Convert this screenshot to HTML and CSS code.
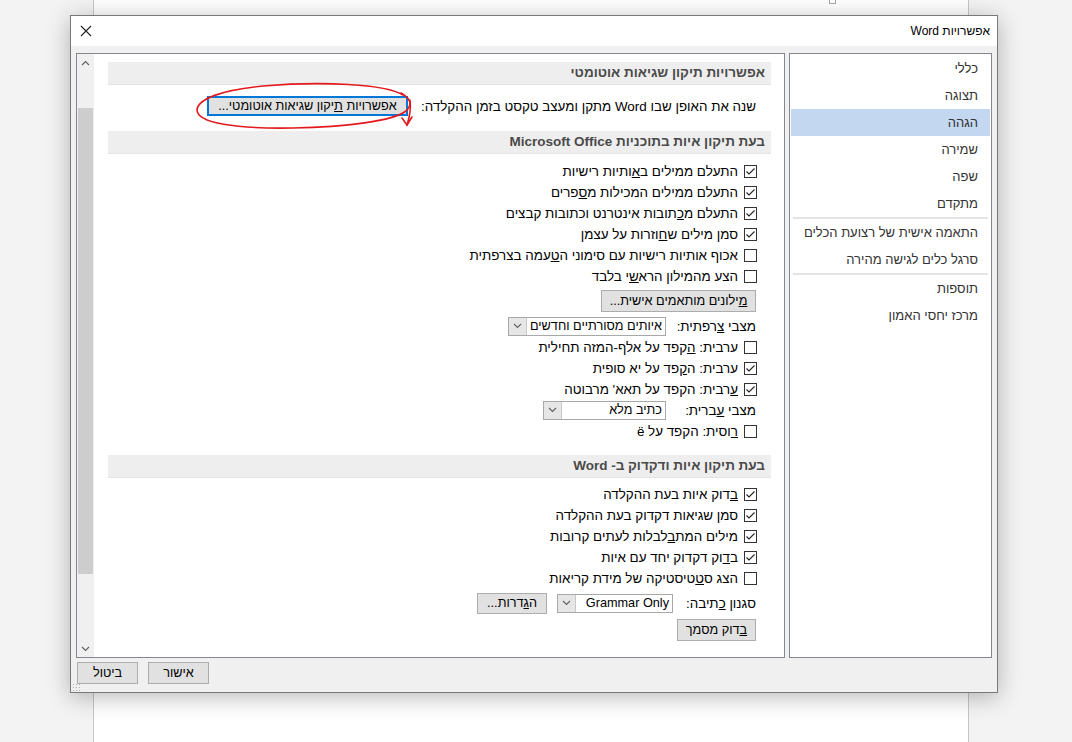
FILE: index.html
```html
<!DOCTYPE html>
<html lang="he">
<head>
<meta charset="utf-8">
<title>אפשרויות Word</title>
<link rel="stylesheet" href="styles.css">
</head>
<body>
<div class="desk">
  <div class="doc"></div>
  <div class="tick"></div>

  <div class="dialog" dir="rtl">
    <div class="titlebar">
      <span class="title">אפשרויות Word</span>
      <span class="close"><svg width="12" height="12" viewBox="0 0 12 12"><path d="M1 1 L11 11 M11 1 L1 11" stroke="#222" stroke-width="1.1" fill="none"/></svg></span>
    </div>

    <div class="body">
      <div class="panes">
        <nav class="nav">
          <div class="nav-item">כללי</div>
          <div class="nav-item">תצוגה</div>
          <div class="nav-item selected">הגהה</div>
          <div class="nav-item">שמירה</div>
          <div class="nav-item">שפה</div>
          <div class="nav-item">מתקדם</div>
          <div class="nav-sep"></div>
          <div class="nav-item">התאמה אישית של רצועת הכלים</div>
          <div class="nav-item">סרגל כלים לגישה מהירה</div>
          <div class="nav-sep"></div>
          <div class="nav-item">תוספות</div>
          <div class="nav-item">מרכז יחסי האמון</div>
        </nav>

        <div class="content">
          <div class="main">
            <div class="sec-head first">אפשרויות תיקון שגיאות אוטומטי</div>
            <div class="line ac-line">
              <span>שנה את האופן שבו Word מתקן ומעצב טקסט בזמן ההקלדה:</span>
              <span class="btn btn-ac"><span>אפשרויות <u>ת</u>יקון שגיאות אוטומטי...</span></span>
            </div>

            <div class="sec-head sec2">בעת תיקון איות בתוכניות Microsoft Office</div>
            <div class="cblist l1">
              <div class="cbrow"><span class="cb"><svg width="11" height="11" viewBox="0 0 11 11"><path d="M1.5 5.5 L4 8 L9.5 2.5" /></svg></span><span>התעלם ממילים ב<u>א</u>ותיות רישיות</span></div>
              <div class="cbrow"><span class="cb"><svg width="11" height="11" viewBox="0 0 11 11"><path d="M1.5 5.5 L4 8 L9.5 2.5" /></svg></span><span>התעלם ממילים המכילות מ<u>ס</u>פרים</span></div>
              <div class="cbrow"><span class="cb"><svg width="11" height="11" viewBox="0 0 11 11"><path d="M1.5 5.5 L4 8 L9.5 2.5" /></svg></span><span>התעלם מ<u>כ</u>תובות אינטרנט וכתובות קבצים</span></div>
              <div class="cbrow"><span class="cb"><svg width="11" height="11" viewBox="0 0 11 11"><path d="M1.5 5.5 L4 8 L9.5 2.5" /></svg></span><span>סמן מילים ש<u>ח</u>וזרות על עצמן</span></div>
              <div class="cbrow"><span class="cb"></span><span>אכוף אותיות רישיות עם סימוני ה<u>ט</u>עמה בצרפתית</span></div>
              <div class="cbrow"><span class="cb"></span><span>הצע מהמילון הרא<u>ש</u>י בלבד</span></div>
            </div>
            <div class="line dict-line"><span class="btn btn-dict"><span><u>מ</u>ילונים מותאמים אישית...</span></span></div>
            <div class="line sel-line fr-line">
              <span class="lbl">מצבי <u>צ</u>רפתית:</span>
              <span class="select sel-fr"><span class="sel-text">איותים מסורתיים וחדשים</span><span class="sel-arrow"><svg width="9" height="6" viewBox="0 0 9 6"><path d="M1 1 L4.5 4.5 L8 1"/></svg></span></span>
            </div>
            <div class="cblist l2">
              <div class="cbrow"><span class="cb"></span><span>ערבית: <u>ה</u>קפד על אלף-המזה תחילית</span></div>
              <div class="cbrow"><span class="cb"><svg width="11" height="11" viewBox="0 0 11 11"><path d="M1.5 5.5 L4 8 L9.5 2.5" /></svg></span><span>ערבית: ה<u>ק</u>פד על יא סופית</span></div>
              <div class="cbrow"><span class="cb"><svg width="11" height="11" viewBox="0 0 11 11"><path d="M1.5 5.5 L4 8 L9.5 2.5" /></svg></span><span><u>ע</u>רבית: הקפד על תאא' מרבוטה</span></div>
            </div>
            <div class="line sel-line he-line">
              <span class="lbl">מצבי <u>ע</u>ברית:</span>
              <span class="select sel-he"><span class="sel-text">כתיב מלא</span><span class="sel-arrow"><svg width="9" height="6" viewBox="0 0 9 6"><path d="M1 1 L4.5 4.5 L8 1"/></svg></span></span>
            </div>
            <div class="cblist l3">
              <div class="cbrow"><span class="cb"></span><span><u>ר</u>וסית: הקפד על ë</span></div>
            </div>

            <div class="sec-head sec3">בעת תיקון איות ודקדוק ב- Word</div>
            <div class="cblist l4">
              <div class="cbrow"><span class="cb"><svg width="11" height="11" viewBox="0 0 11 11"><path d="M1.5 5.5 L4 8 L9.5 2.5" /></svg></span><span><u>ב</u>דוק איות בעת ההקלדה</span></div>
              <div class="cbrow"><span class="cb"><svg width="11" height="11" viewBox="0 0 11 11"><path d="M1.5 5.5 L4 8 L9.5 2.5" /></svg></span><span>סמ<u>ן</u> שגיאות דקדוק בעת ההקלדה</span></div>
              <div class="cbrow"><span class="cb"><svg width="11" height="11" viewBox="0 0 11 11"><path d="M1.5 5.5 L4 8 L9.5 2.5" /></svg></span><span>מילים המת<u>ב</u>לבלות לעתים קרובות</span></div>
              <div class="cbrow"><span class="cb"><svg width="11" height="11" viewBox="0 0 11 11"><path d="M1.5 5.5 L4 8 L9.5 2.5" /></svg></span><span>ב<u>ד</u>וק דקדוק יחד עם איות</span></div>
              <div class="cbrow"><span class="cb"></span><span>הצג ס<u>ט</u>טיסטיקה של מידת קריאות</span></div>
            </div>
            <div class="line sel-line ws-line">
              <span class="lbl lbl-ws">סגנון <u>כ</u>תיבה:</span>
              <span class="select sel-ws"><span class="sel-text">Grammar Only</span><span class="sel-arrow"><svg width="9" height="6" viewBox="0 0 9 6"><path d="M1 1 L4.5 4.5 L8 1"/></svg></span></span>
              <span class="btn btn-set"><span>ה<u>ג</u>דרות...</span></span>
            </div>
            <div class="line chk-line"><span class="btn btn-chk"><span><u>ב</u>דוק מסמך</span></span></div>
          </div>

          <div class="scrollbar">
            <span class="sb-arrow"><svg width="9" height="6" viewBox="0 0 9 6"><path d="M1 5 L4.5 1.5 L8 5"/></svg></span>
            <div class="sb-track"><div class="sb-thumb"></div></div>
            <span class="sb-arrow"><svg width="9" height="6" viewBox="0 0 9 6"><path d="M1 1 L4.5 4.5 L8 1"/></svg></span>
          </div>
        </div>
      </div>

      <div class="footer">
        <span class="btn btn-foot">אישור</span>
        <span class="btn btn-foot">ביטול</span>
      </div>
      <div class="grip"></div>
    </div>

    <svg class="annot" width="240" height="50" viewBox="190 82 240 50">
      <path d="M402 94 C 385 83, 320 80, 262 85 C 220 89, 197 98, 196 109 C 196 122, 235 128, 292 127 C 345 126, 392 120, 405 110 C 412 103, 409 97, 400 92" />
      <path d="M409 99 C 410 107, 409 115, 406 124" />
      <path d="M401 117 L 406 124 L 411 116" />
    </svg>
  </div>
</div>
</body>
</html>
```

FILE: styles.css
```css
* { box-sizing: border-box; }
html, body { margin: 0; padding: 0; }
body {
  width: 1072px;
  height: 742px;
  overflow: hidden;
  background: #f3f3f3;
  font-family: "Liberation Sans", "DejaVu Sans", Arial, sans-serif;
}
.desk {
  position: relative;
  width: 1072px;
  height: 742px;
}
.doc {
  margin-left: 93px;
  width: 876px;
  height: 742px;
  background: #fff;
  border-left: 1px solid #c6c6c6;
  border-right: 1px solid #c6c6c6;
}
.tick {
  position: absolute;
  left: 829px;
  top: -2px;
  width: 7px;
  height: 6px;
  border: 1px solid #a8a8a8;
  background: #fff;
}
.dialog {
  position: absolute;
  left: 70px;
  top: 15px;
  width: 928px;
  height: 678px;
  border: 1px solid #787878;
  background: #f0f0f0;
  box-shadow: 0 4px 22px rgba(0,0,0,0.28);
  display: flex;
  flex-direction: column;
}
.titlebar {
  height: 30px;
  background: #fff;
  display: flex;
  align-items: center;
  justify-content: space-between;
  padding: 0 7px 0 9px;
  font-size: 12px;
  color: #000;
}
.close { display: flex; width: 12px; height: 12px; }
.body {
  position: relative;
  flex: 1;
  display: flex;
  flex-direction: column;
  padding: 7px 5px 0 5px;
}
.panes {
  display: flex;
  gap: 4px;
  height: 605px;
}
.nav {
  width: 203px;
  border: 1px solid #828790;
  background: #fff;
  padding-top: 1px;
  font-size: 13px;
  color: #333;
}
.nav-item {
  height: 27px;
  line-height: 27px;
  padding-right: 12px;
  margin: 0 1px;
  white-space: nowrap;
}
.nav-item.selected { background: #c4d7f1; }
.nav-sep {
  height: 2px;
  margin: 0 3px;
  background: #e4e4e4;
}
.content {
  width: 709px;
  border: 1px solid #828790;
  background: #fff;
  display: flex;
}
.main {
  flex: 1;
  padding: 8px 13px 0 14px;
  font-size: 13.4px;
  color: #000;
}
.sec-head {
  height: 23px;
  line-height: 22px;
  background: #eeeeee;
  border-bottom: 1px solid #e3e3e3;
  padding-right: 6px;
  font-weight: bold;
  font-size: 13.5px;
  color: #4a4a4a;
}
.sec2 { margin-top: 15px; }
.sec3 { margin-top: 13px; }
.line {
  display: flex;
  align-items: center;
  padding-right: 15px;
}
.ac-line { margin-top: 11px; height: 20px; gap: 13px; }
.btn {
  display: inline-flex;
  align-items: center;
  justify-content: center;
  background: #e1e1e1;
  border: 1px solid #adadad;
  font-size: 12.7px;
  color: #000;
  white-space: nowrap;
}
.btn-ac {
  width: 201px;
  height: 20px;
  border: 1px solid #0078d7;
  box-shadow: inset 0 0 0 1px #0078d7;
}
.cblist { padding-right: 14px; }
.l1 { margin-top: 7px; }
.l2 { margin-top: 1px; }
.l3 { margin-top: 1px; }
.l4 { margin-top: 6px; }
.cbrow {
  height: 21px;
  display: flex;
  align-items: center;
  gap: 6px;
  white-space: nowrap;
}
.cb {
  width: 13px;
  height: 13px;
  border: 1px solid #333;
  background: #fff;
  display: flex;
  align-items: center;
  justify-content: center;
  flex: none;
}
.cb svg path { fill: none; stroke: #222; stroke-width: 1.1; }
.dict-line { margin-top: 3px; }
.btn-dict { width: 155px; height: 22px; }
.sel-line { height: 20px; }
.fr-line { margin-top: 4px; }
.he-line { margin-top: 0; }
.ws-line { margin-top: 4px; }
.lbl { width: 90px; white-space: nowrap; }
.lbl-ws { width: 83px; }
.select {
  height: 19px;
  border: 1px solid #a8a8a8;
  background: #fff;
  display: flex;
  font-size: 12.7px;
}
.sel-text {
  flex: 1;
  padding-right: 3px;
  line-height: 17px;
  white-space: nowrap;
  overflow: hidden;
}
.sel-arrow {
  width: 18px;
  flex: none;
  background: #e6e6e6;
  border-right: 1px solid #c8c8c8;
  display: flex;
  align-items: center;
  justify-content: center;
}
.sel-arrow svg path, .sb-arrow svg path { fill: none; stroke: #606060; stroke-width: 1.1; }
.sel-fr { width: 158px; }
.sel-he { width: 123px; }
.sel-ws { width: 116px; }
.btn-set { width: 70px; height: 21px; margin-right: 10px; }
.chk-line { margin-top: 6px; }
.btn-chk { width: 79px; height: 22px; }
.scrollbar {
  width: 17px;
  background: #f0f0f0;
  display: flex;
  flex-direction: column;
  align-items: stretch;
}
.sb-arrow {
  height: 17px;
  display: flex;
  align-items: center;
  justify-content: center;
}
.sb-track {
  flex: 1;
  padding: 37px 1px 66px 1px;
  display: flex;
}
.sb-thumb {
  flex: 1;
  background: #cdcdcd;
}
.footer {
  display: flex;
  justify-content: flex-end;
  gap: 10px;
  margin-top: 4px;
  padding-left: 1px;
}
.btn-foot { width: 61px; height: 22px; }
.grip {
  position: absolute;
  left: 1px;
  bottom: 1px;
  width: 8px;
  height: 8px;
  background-image: radial-gradient(circle, #b0b0b0 0.8px, transparent 1px);
  background-size: 3px 3px;
}
.annot {
  position: absolute;
  left: 120px;
  top: 67px;
  overflow: visible;
}
.annot path { fill: none; stroke: #e3191e; stroke-width: 1.6; stroke-linecap: round; }
```
